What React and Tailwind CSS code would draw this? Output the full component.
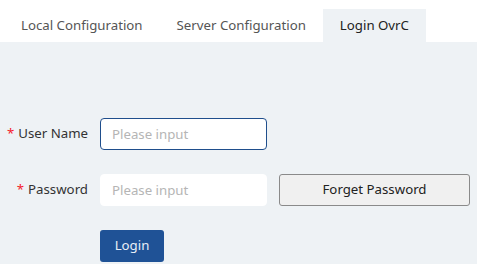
export default function App() {
  const tabs = ["Local Configuration", "Server Configuration", "Login OvrC"];
  const active = 2;

  return (
    <div className="w-[477px] h-[264px] flex flex-col bg-white overflow-hidden font-['Noto_Sans',sans-serif] text-[13.25px] text-[#333]">
      <div className="h-[42px] flex items-end pl-[4px] bg-white">
        {tabs.map((t, i) => (
          <div
            key={t}
            className={
              "h-[33px] px-[17px] flex items-center " +
              (i === active ? "bg-[#eef2f5] text-[#222]" : "text-[#555]")
            }
          >
            {t}
          </div>
        ))}
      </div>

      <div className="flex-1 bg-[#eef2f5] pt-[76px] flex flex-col gap-[24px]">
        <div className="flex items-center">
          <label className="w-[88px] text-right text-[#333]">
            <span className="text-[#f5222d] mr-[4px]">*</span>User Name
          </label>
          <input
            autoFocus
            placeholder="Please input"
            className="ml-[12px] w-[167px] h-[32px] px-[11px] bg-white rounded-[4px] border border-[#1f4e8c] outline-none text-[13.25px] placeholder:text-[#b5b5b5]"
          />
        </div>

        <div className="flex items-center">
          <label className="w-[88px] text-right text-[#333]">
            <span className="text-[#f5222d] mr-[4px]">*</span>Password
          </label>
          <input
            type="password"
            placeholder="Please input"
            className="ml-[12px] w-[167px] h-[32px] px-[11px] bg-white rounded-[4px] border border-white outline-none text-[13.25px] placeholder:text-[#b5b5b5]"
          />
          <button className="ml-[12px] w-[191px] h-[32px] rounded-[3px] border border-[#8a8a8a] bg-[#f0f0f0] text-[#222]">
            Forget Password
          </button>
        </div>

        <div className="flex pl-[100px]">
          <button className="w-[64px] h-[32px] rounded-[3px] bg-[#1f5296] text-[#e8eef6]">
            Login
          </button>
        </div>
      </div>
    </div>
  );
}
